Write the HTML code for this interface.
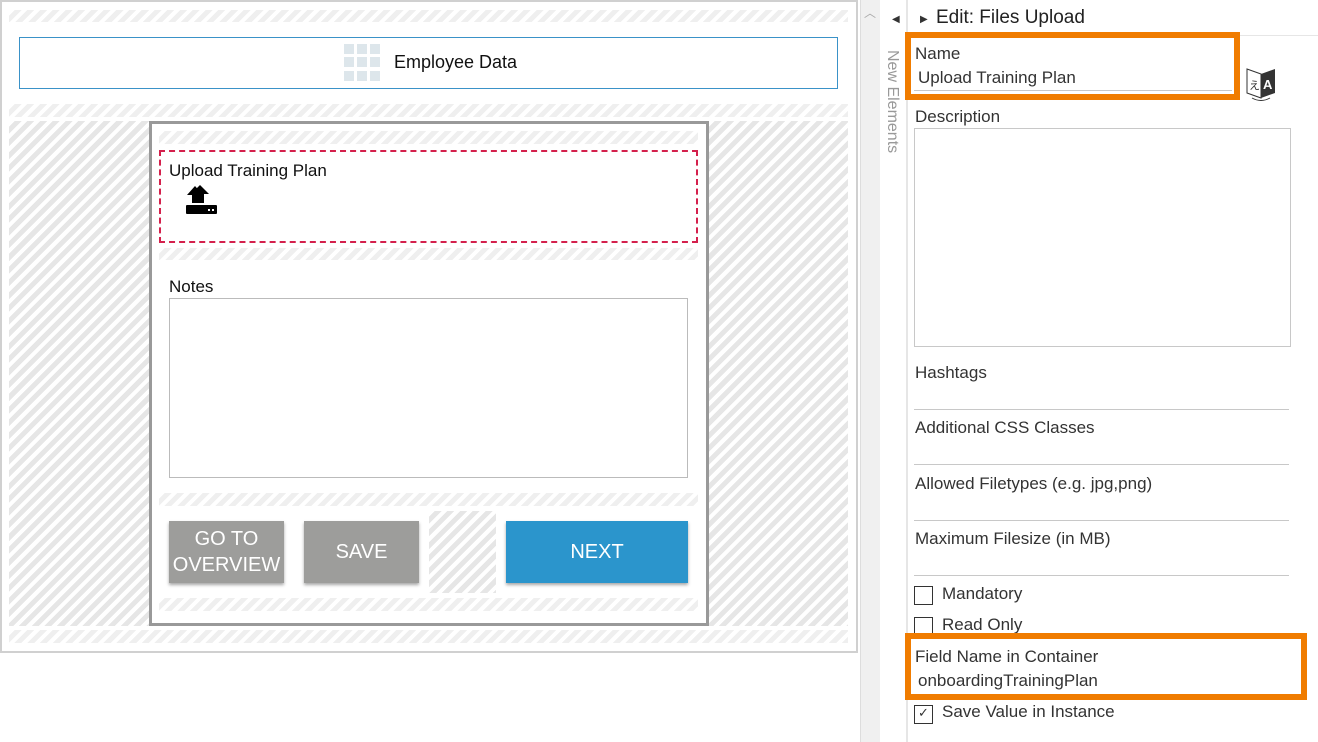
<!DOCTYPE html>
<html><head><meta charset="utf-8"><style>
*{box-sizing:border-box;margin:0;padding:0}
body{width:1318px;height:742px;background:#fff;position:relative;overflow:hidden;font-family:"Liberation Sans",sans-serif;color:#222}
.a{position:absolute}
.st{position:absolute;background:repeating-linear-gradient(135deg,#fff 0 4px,#efefef 4px 9px)}
.st2{position:absolute;background:repeating-linear-gradient(135deg,#fff 0 4px,#e6e6e6 4px 9px)}
.btn{position:absolute;color:#fff;font-size:20px;text-align:center;display:flex;align-items:center;justify-content:center;line-height:26px;box-shadow:0 2px 3px rgba(0,0,0,.35)}
.lbl{position:absolute;left:915px;font-size:17px;color:#333}
.ln{position:absolute;left:914px;width:375px;height:1px;background:#c8c8c8}
.cb{position:absolute;left:914px;width:19px;height:19px;border:1.5px solid #333;background:#fff}
</style></head><body>
<div class="a" style="left:0;top:0;width:858px;height:653px;border:2px solid #d0d0d0"></div>
<div class="st" style="left:9px;top:10px;width:839px;height:12px"></div>
<div class="a" style="left:19px;top:37px;width:819px;height:52px;border:1px solid #3a92c8"></div>
<div class="a" style="left:344px;top:44px;width:38px;height:37px;display:grid;grid-template-columns:repeat(3,10px);gap:3px">
<i style="background:#dde6eb;height:10px"></i><i style="background:#dde6eb;height:10px"></i><i style="background:#dde6eb;height:10px"></i><i style="background:#dde6eb;height:10px"></i><i style="background:#dde6eb;height:10px"></i><i style="background:#dde6eb;height:10px"></i><i style="background:#dde6eb;height:10px"></i><i style="background:#dde6eb;height:10px"></i><i style="background:#dde6eb;height:10px"></i></div>
<div class="a" style="left:394px;top:52px;font-size:18px;color:#111">Employee Data</div>
<div class="st" style="left:9px;top:104px;width:839px;height:13px"></div>
<div class="st2" style="left:9px;top:121px;width:839px;height:505px"></div>
<div class="a" style="left:149px;top:121px;width:560px;height:505px;border:3px solid #999;background:#fff"></div>
<div class="st" style="left:159px;top:131px;width:539px;height:13px"></div>
<div class="a" style="left:159px;top:150px;width:539px;height:93px;border:2px dashed #d4204c"></div>
<div class="a" style="left:169px;top:161px;font-size:17px;color:#111">Upload Training Plan</div>
<svg class="a" style="left:185px;top:185px" width="32" height="30" viewBox="0 0 32 30"><path d="M10 1h0L2 10h5v8h6v-8h5z" fill="#000" transform="translate(0,0)"/><path d="M15 0L6 9h5v9h8V9h5z" fill="#000"/><rect x="1" y="20" width="31" height="9" rx="1" fill="#000"/><rect x="23" y="24" width="2" height="2" fill="#fff"/><rect x="27" y="24" width="2" height="2" fill="#fff"/></svg>
<div class="st" style="left:159px;top:248px;width:539px;height:12px"></div>
<div class="a" style="left:169px;top:277px;font-size:17px;color:#111">Notes</div>
<div class="a" style="left:169px;top:298px;width:519px;height:180px;border:1px solid #bbb"></div>
<div class="st" style="left:159px;top:493px;width:539px;height:13px"></div>
<div class="btn" style="left:169px;top:521px;width:115px;height:62px;background:#9d9d9b">GO TO<br>OVERVIEW</div>
<div class="btn" style="left:304px;top:521px;width:115px;height:62px;background:#9d9d9b">SAVE</div>
<div class="st2" style="left:429px;top:511px;width:67px;height:82px"></div>
<div class="btn" style="left:506px;top:521px;width:182px;height:62px;background:#2b95cc">NEXT</div>
<div class="st" style="left:159px;top:598px;width:539px;height:13px"></div>
<div class="st" style="left:9px;top:630px;width:839px;height:13px"></div>

<div class="a" style="left:860px;top:0;width:20px;height:742px;background:#f0f0f0;border-left:1px solid #ddd"></div>
<div class="a" style="left:864px;top:4px;font-size:12px;color:#aaa">︿</div>
<div class="a" style="left:906px;top:0;width:2px;height:742px;background:#e6e6e6"></div>
<div class="a" style="left:892px;top:14px;font-size:10px;color:#333">◀</div>
<div class="a" style="left:883px;top:50px;writing-mode:vertical-rl;font-size:16px;color:#999">New Elements</div>
<div class="a" style="left:920px;top:14px;font-size:10px;color:#333">▶</div>
<div class="a" style="left:936px;top:7px;font-size:19px;color:#222">Edit: Files Upload</div>
<div class="a" style="left:908px;top:35px;width:410px;height:1px;background:#e6e6e6"></div>

<div class="a" style="left:905px;top:32px;width:335px;height:68px;border:6px solid #f07c00"></div>
<div class="lbl" style="top:44px">Name</div>
<div class="lbl" style="top:68px;left:918px">Upload Training Plan</div>
<div class="a" style="left:914px;top:90px;width:318px;height:1px;background:#c8c8c8"></div>
<svg class="a" style="left:1244px;top:65px" width="34" height="38" viewBox="0 0 34 38"><path d="M3 4l14 5v24L3 28z" fill="#fff" stroke="#333" stroke-width="1"/><path d="M17 9l14-5v24l-14 5z" fill="#333"/><text x="5" y="24" font-size="11" fill="#333" font-family="Liberation Sans">え</text><text x="19" y="24" font-size="13" font-weight="bold" fill="#fff" font-family="Liberation Sans">A</text><path d="M8 33q9 5 18 0" fill="none" stroke="#333" stroke-width="1"/></svg>
<div class="lbl" style="top:107px">Description</div>
<div class="a" style="left:914px;top:128px;width:377px;height:219px;border:1px solid #c8c8c8"></div>
<div class="lbl" style="top:363px">Hashtags</div>
<div class="ln" style="top:409px"></div>
<div class="lbl" style="top:418px">Additional CSS Classes</div>
<div class="ln" style="top:464px"></div>
<div class="lbl" style="top:474px">Allowed Filetypes (e.g. jpg,png)</div>
<div class="ln" style="top:520px"></div>
<div class="lbl" style="top:529px">Maximum Filesize (in MB)</div>
<div class="ln" style="top:575px"></div>
<div class="cb" style="top:586px"></div>
<div class="lbl" style="top:584px;left:942px">Mandatory</div>
<div class="cb" style="top:617px"></div>
<div class="lbl" style="top:615px;left:942px">Read Only</div>
<div class="a" style="left:905px;top:633px;width:402px;height:67px;border:6px solid #f07c00;background:#fff"></div>
<div class="lbl" style="top:647px">Field Name in Container</div>
<div class="lbl" style="top:671px;left:918px">onboardingTrainingPlan</div>
<div class="cb" style="top:705px"></div>
<div class="a" style="left:918px;top:705px;font-size:13px;color:#333">✓</div>
<div class="lbl" style="top:702px;left:942px">Save Value in Instance</div>
</body></html>
